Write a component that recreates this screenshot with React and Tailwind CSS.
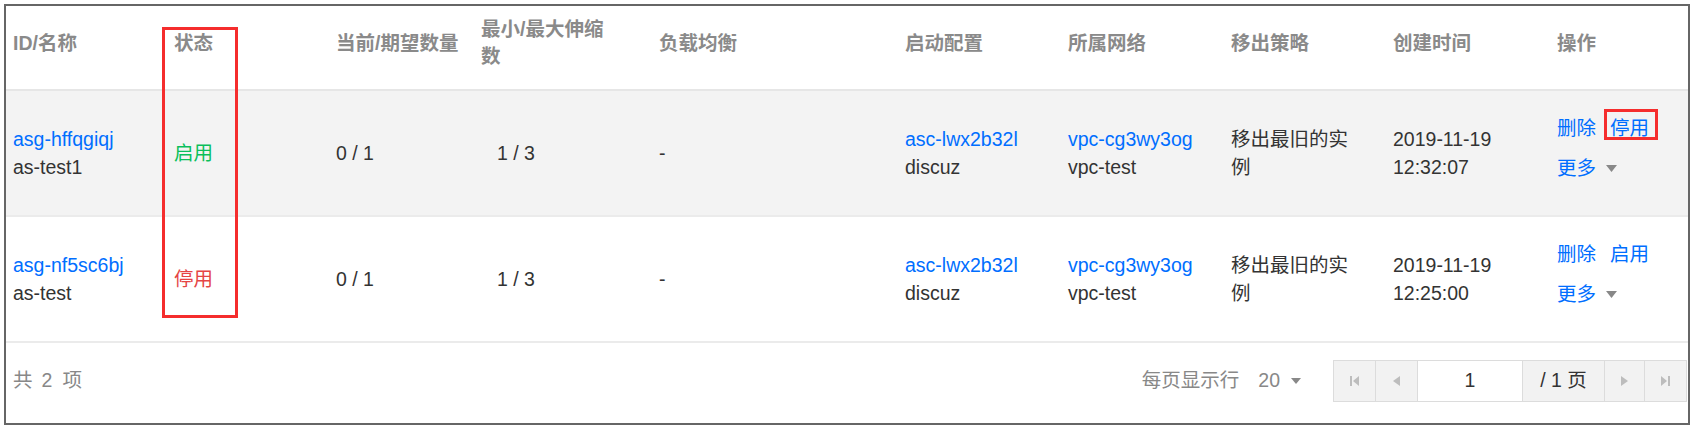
import React from 'react';

const rows = [
  {
    id: 'asg-hffqgiqj', name: 'as-test1', status: '启用', enabled: true,
    qty: '0 / 1', range: '1 / 3', lb: '-', cfg: 'asc-lwx2b32l', cfgName: 'discuz',
    vpc: 'vpc-cg3wy3og', vpcName: 'vpc-test', policy: '移出最旧的实例',
    date: '2019-11-19', time: '12:32:07', toggle: '停用', marked: true, hover: true,
  },
  {
    id: 'asg-nf5sc6bj', name: 'as-test', status: '停用', enabled: false,
    qty: '0 / 1', range: '1 / 3', lb: '-', cfg: 'asc-lwx2b32l', cfgName: 'discuz',
    vpc: 'vpc-cg3wy3og', vpcName: 'vpc-test', policy: '移出最旧的实例',
    date: '2019-11-19', time: '12:25:00', toggle: '启用', marked: false, hover: false,
  },
];

const cols = 'grid grid-cols-[161px_162px_161px_162px_246px_163px_163px_162px_164px_138px]';
const cell = 'pl-[7px] pr-[24px]';

const Caret = ({ className }) => (
  <svg width="11" height="7" viewBox="0 0 11 7" className={className}>
    <polygon points="0,0 11,0 5.5,7" fill="#888" />
  </svg>
);

const PageIcon = ({ type }) => {
  const c = '#bdbdbd';
  if (type === 'first') return (
    <svg width="9" height="10" viewBox="0 0 9 10"><rect x="0" y="0" width="2" height="10" fill={c} /><polygon points="9,0 3,5 9,10" fill={c} /></svg>
  );
  if (type === 'prev') return (
    <svg width="7" height="10" viewBox="0 0 7 10"><polygon points="7,0 0,5 7,10" fill={c} /></svg>
  );
  if (type === 'next') return (
    <svg width="7" height="10" viewBox="0 0 7 10"><polygon points="0,0 7,5 0,10" fill={c} /></svg>
  );
  return (
    <svg width="9" height="10" viewBox="0 0 9 10"><polygon points="0,0 6,5 0,10" fill={c} /><rect x="7" y="0" width="2" height="10" fill={c} /></svg>
  );
};

const headers = ['ID/名称', '状态', '当前/期望数量', '最小/最大伸缩数', '负载均衡', '启动配置', '所属网络', '移出策略', '创建时间', '操作'];

export default function App() {
  return (
    <div className="bg-white w-[1696px] h-[430px] p-[4px] font-['Liberation_Sans','Noto_Sans_CJK_SC',sans-serif] text-[19.5px] text-[#333]">
      <div className="relative w-[1686px] h-[421px] border-2 border-[#666]">
        {/* header */}
        <div className={`${cols} h-[85px] items-center pb-[9px] border-b-2 border-[#e6e6e6] leading-[27px]`}>
          {headers.map((h, i) => (
            <div key={h} className={`${i === 3 ? '-ml-[16px] pl-[7px] pr-[40px]' : cell} font-bold text-[#8a8a8a]`}>{h}</div>
          ))}
        </div>

        {rows.map((r) => (
          <div key={r.id} className={`${cols} h-[126px] items-center border-b-2 border-[#ebebeb] leading-[28px] ${r.hover ? 'bg-[#f3f3f3]' : 'bg-white'}`}>
            <div className={cell}>
              <div className="text-[#006eff]">{r.id}</div>
              <div>{r.name}</div>
            </div>
            <div className={`${cell} ${r.enabled ? 'text-[#0abf5b]' : 'text-[#e54545]'}`}>{r.status}</div>
            <div className={cell}>{r.qty}</div>
            <div className={cell}>{r.range}</div>
            <div className={cell}>{r.lb}</div>
            <div className={cell}>
              <div className="text-[#006eff]">{r.cfg}</div>
              <div>{r.cfgName}</div>
            </div>
            <div className={cell}>
              <div className="text-[#006eff]">{r.vpc}</div>
              <div>{r.vpcName}</div>
            </div>
            <div className={cell}>{r.policy}</div>
            <div className={cell}>
              <div>{r.date}</div>
              <div>{r.time}</div>
            </div>
            <div className={`${cell} pr-0 pb-[10px] flex flex-col gap-[12px] text-[#006eff]`}>
              <div className="flex items-center">
                <span>删除</span>
                <span className="relative ml-[14px]">
                  {r.toggle}
                  {r.marked && (
                    <span className="absolute -left-[6px] -top-[5px] w-[54px] h-[31px] border-[3px] border-[#f52d2d]" />
                  )}
                </span>
              </div>
              <div className="flex items-center">
                <span>更多</span>
                <Caret className="ml-[10px]" />
              </div>
            </div>
          </div>
        ))}

        {/* footer */}
        <div className="flex h-[80px] items-center justify-between pl-[7px] pr-[1px] pb-[4px] text-[#888]">
          <div>共<span className="ml-[9px] mr-[10px]">2</span>项</div>
          <div className="flex items-center">
            <span>每页显示行</span>
            <span className="ml-[19px]">20</span>
            <svg width="10" height="6" viewBox="0 0 10 6" className="ml-[11px]"><polygon points="0,0 10,0 5,6" fill="#888" /></svg>
            <div className="ml-[32px] flex h-[42px] border border-[#dcdcdc] bg-[#f2f2f2] text-[#333]">
              <div className="w-[42px] border-r border-[#dcdcdc] flex items-center justify-center"><PageIcon type="first" /></div>
              <div className="w-[42px] border-r border-[#dcdcdc] flex items-center justify-center"><PageIcon type="prev" /></div>
              <div className="w-[105px] border-r border-[#dcdcdc] bg-white flex items-center justify-center">1</div>
              <div className="w-[82px] border-r border-[#dcdcdc] flex items-center justify-center">/ 1 页</div>
              <div className="w-[40px] border-r border-[#dcdcdc] flex items-center justify-center"><PageIcon type="next" /></div>
              <div className="w-[41px] flex items-center justify-center"><PageIcon type="last" /></div>
            </div>
          </div>
        </div>

        {/* highlight over status column */}
        <div className="absolute left-[156px] top-[21px] w-[76px] h-[291px] border-[3px] border-[#f52d2d]" />
      </div>
    </div>
  );
}
